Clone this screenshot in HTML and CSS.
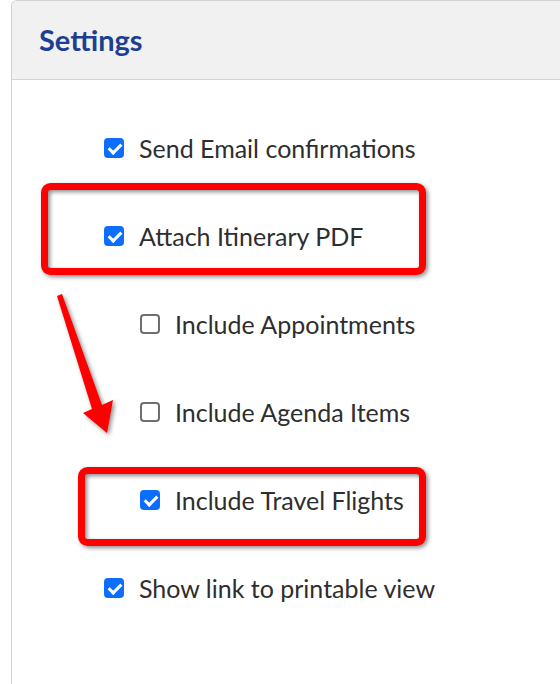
FILE: index.html
```html
<!DOCTYPE html>
<html>
<head>
    <title>Settings</title>
    <link rel="stylesheet" href="styles.css">
</head>
<body>
    <div class="panel">
        <div class="panel-header">
            <h2>Settings</h2>
        </div>
        <div class="options">
            <label class="option"><input type="checkbox" checked><span>Send Email confirmations</span></label>
            <label class="option"><input type="checkbox" checked><span>Attach Itinerary PDF</span></label>
            <label class="option sub"><input type="checkbox"><span>Include Appointments</span></label>
            <label class="option sub"><input type="checkbox"><span>Include Agenda Items</span></label>
            <label class="option sub"><input type="checkbox" checked><span>Include Travel Flights</span></label>
            <label class="option"><input type="checkbox" checked><span>Show link to printable view</span></label>
        </div>
    </div>

    <!-- callouts drawn over the form -->
    <svg class="callouts" width="560" height="684" viewBox="0 0 560 684">
        <rect class="mark" x="44.5" y="186.5" width="378" height="85" rx="6"></rect>
        <rect class="mark" x="81.5" y="470.5" width="341" height="72" rx="6"></rect>
        <polygon class="arrow" points="57,296 62,294 102,405 113,400 107,433 83,413 92,409"></polygon>
    </svg>
</body>
</html>
```

FILE: styles.css
```css
body { margin: 0; background: #fff; font-family: Lato, "Noto Sans", sans-serif; color: #2e2e2e; }

.panel {
    margin-left: 11px;
    min-height: 100vh;
    border: 1px solid #d2d2d2;
    border-right: none;
    border-bottom: none;
    border-radius: 6px 0 0 0;
    box-sizing: border-box;
}
.panel-header {
    height: 78px;
    display: flex;
    align-items: center;
    padding-left: 27px;
    background: #f1f1f1;
    border-bottom: 1px solid #d4d4d4;
    border-radius: 6px 0 0 0;
}
.panel-header h2 {
    margin: 0 0 2px;
    font-size: 29px;
    font-weight: 700;
    color: #1c3f93;
}

.options { padding-top: 24px; }
.option {
    height: 88px;
    display: flex;
    align-items: center;
    gap: 15px;
    padding-left: 92px;
    font-size: 25px;
}
.option.sub { padding-left: 128px; }

.option input {
    appearance: none;
    position: relative;
    margin: 0;
    width: 20px;
    height: 20px;
    border: 2px solid #6f6f6f;
    border-radius: 4px;
    background: #fff;
    box-sizing: border-box;
}
.option input:checked {
    background: #0d6efd;
    border-color: #0d6efd;
}
.option input:checked::after {
    content: "";
    position: absolute;
    left: 5px;
    top: 1px;
    width: 5px;
    height: 10px;
    border: solid #fff;
    border-width: 0 3px 3px 0;
    transform: rotate(45deg);
}

.callouts {
    position: absolute;
    top: 0;
    left: 0;
    pointer-events: none;
}
.callouts .mark {
    fill: none;
    stroke: #ff0000;
    stroke-width: 7;
    filter: drop-shadow(2px 2px 2px rgba(0,0,0,0.45));
}
.callouts .arrow {
    fill: #ff0000;
    filter: drop-shadow(2px 2px 2px rgba(0,0,0,0.45));
}
```
